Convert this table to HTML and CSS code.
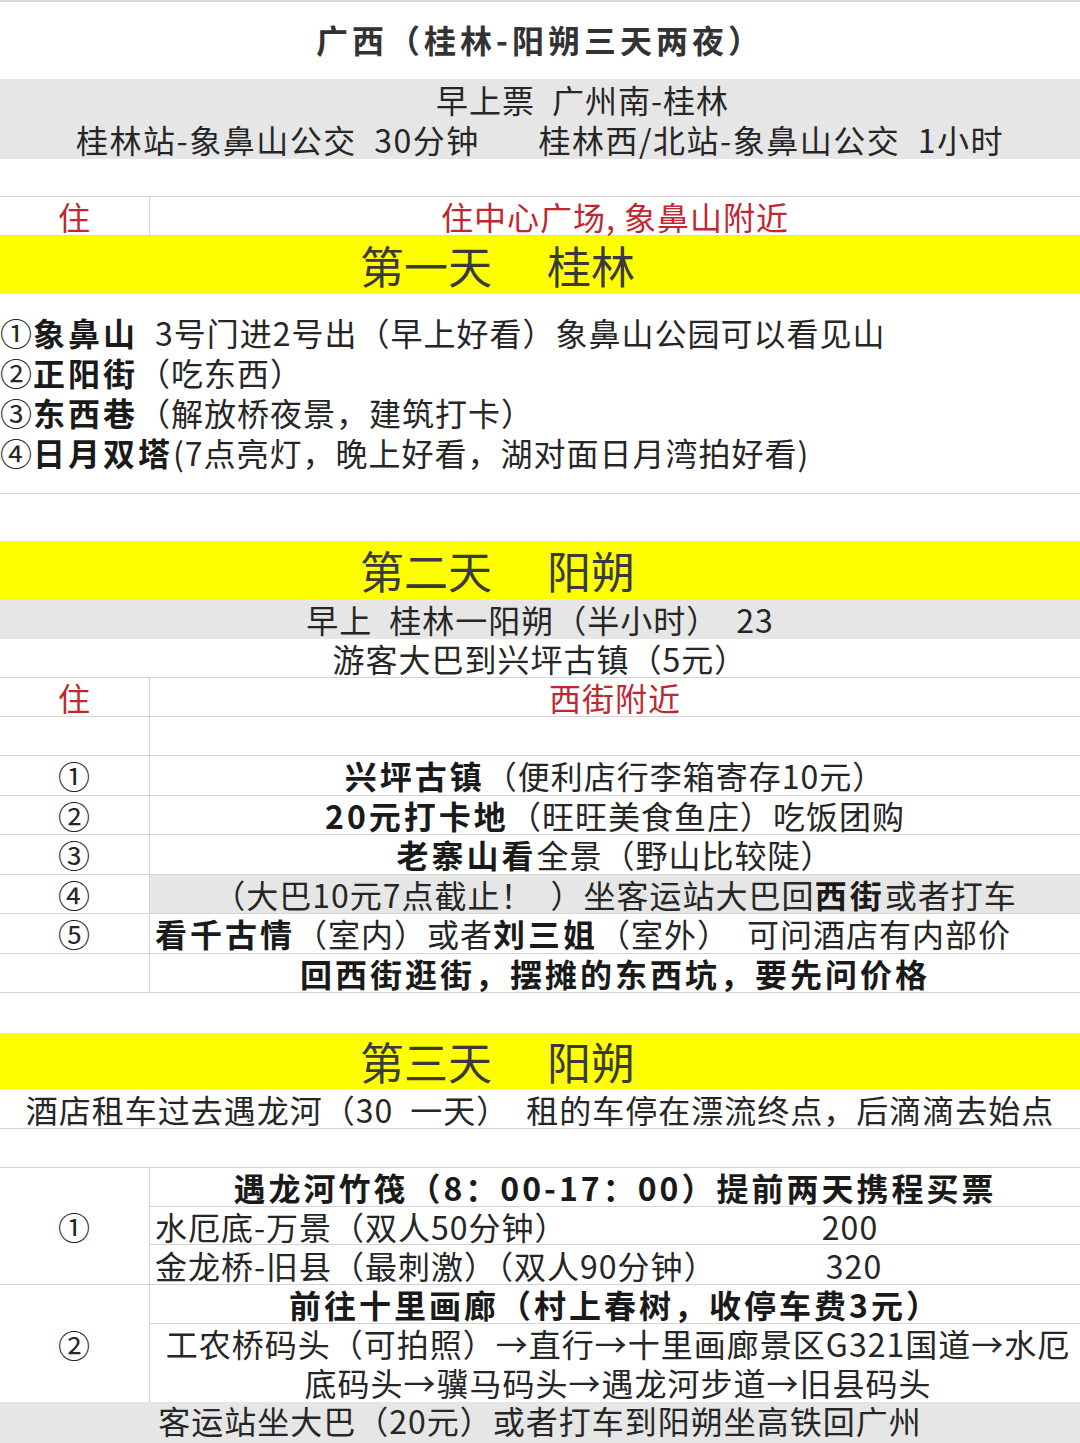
FILE: index.html
```html
<!DOCTYPE html>
<html lang="zh-CN">
<head>
<meta charset="utf-8">
<title>广西（桂林-阳朔三天两夜）</title>
<link rel="stylesheet" href="styles.css">
</head>
<body>
<div class="sheet">
  <div class="title">广西（桂林-阳朔三天两夜）</div>

  <div class="band gray">
    <div class="bline first">早上票&ensp;广州南-桂林</div>
    <div class="bline second">桂林站-象鼻山公交&ensp;30分钟&emsp;&ensp;&thinsp;桂林西/北站-象鼻山公交&ensp;1小时</div>
  </div>
  <div class="gap ruled h38"></div>
  <div class="row ruled h39">
    <div class="num red">住</div>
    <div class="cell red">住中心广场, 象鼻山附近</div>
  </div>

  <div class="day d1"><span>第一天</span><span>桂林</span></div>
  <div class="list ruled">
    <p>①<b>象鼻山</b>&ensp;3号门进2号出（早上好看）象鼻山公园可以看见山</p>
    <p>②<b>正阳街</b>（吃东西）</p>
    <p>③<b>东西巷</b>（解放桥夜景，建筑打卡）</p>
    <p>④<b>日月双塔</b>(7点亮灯，晚上好看，湖对面日月湾拍好看)</p>
  </div>
  <div class="gap h47"></div>

  <div class="day d2"><span>第二天</span><span>阳朔</span></div>
  <div class="wide gray h40">早上&ensp;桂林一阳朔（半小时）&ensp;23</div>
  <div class="wide ruled h39">游客大巴到兴坪古镇（5元）</div>
  <div class="row ruled h39">
    <div class="num red">住</div>
    <div class="cell red">西街附近</div>
  </div>
  <div class="row ruled h39">
    <div class="num"></div>
    <div class="cell"></div>
  </div>
  <div class="row ruled item">
    <div class="num">①</div>
    <div class="cell"><b>兴坪古镇</b>（便利店行李箱寄存10元）</div>
  </div>
  <div class="row ruled item">
    <div class="num">②</div>
    <div class="cell"><b>20元打卡地</b>（旺旺美食鱼庄）吃饭团购</div>
  </div>
  <div class="row ruled item">
    <div class="num">③</div>
    <div class="cell"><b>老寨山看</b>全景（野山比较陡）</div>
  </div>
  <div class="row ruled item">
    <div class="num">④</div>
    <div class="cell gray">（大巴10元7点截止！&ensp;）坐客运站大巴回<b>西街</b>或者打车</div>
  </div>
  <div class="row ruled item">
    <div class="num">⑤</div>
    <div class="cell left"><b>看千古情</b>（室内）或者<b>刘三姐</b>（室外）&ensp;可问酒店有内部价</div>
  </div>
  <div class="row ruled item">
    <div class="num"></div>
    <div class="cell"><b>回西街逛街，摆摊的东西坑，要先问价格</b></div>
  </div>
  <div class="gap h40"></div>

  <div class="day d3"><span>第三天</span><span>阳朔</span></div>
  <div class="wide ruled h40">酒店租车过去遇龙河（30&ensp;一天）&ensp;租的车停在漂流终点，后滴滴去始点</div>
  <div class="gap ruled h39"></div>

  <div class="block ruled">
    <div class="num">①</div>
    <div class="sub">
      <div class="srow ruled"><b>遇龙河竹筏（8：00-17：00）提前两天携程买票</b></div>
      <div class="srow ruled split"><span>水厄底-万景（双人50分钟）</span><span class="price">200</span></div>
      <div class="srow split"><span>金龙桥-旧县（最刺激）（双人90分钟）</span><span class="price p2">320</span></div>
    </div>
  </div>
  <div class="block">
    <div class="num">②</div>
    <div class="sub">
      <div class="srow ruled"><b>前往十里画廊（村上春树，收停车费3元）</b></div>
      <div class="srow tall">工农桥码头（可拍照）→直行→十里画廊景区G321国道→水厄<br>底码头→骥马码头→遇龙河步道→旧县码头</div>
    </div>
  </div>
  <div class="wide gray foot">客运站坐大巴（20元）或者打车到阳朔坐高铁回广州</div>
</div>
</body>
</html>
```

FILE: styles.css
```css
* {
  box-sizing: border-box;
  margin: 0;
  padding: 0;
}

html,
body {
  background: #ffffff;
}

body {
  width: 1080px;
  font-family: "Noto Sans CJK SC", "Noto Sans", sans-serif;
  font-size: 32px;
  letter-spacing: 1px;
  line-height: 34px;
  color: #262626;
}

b {
  font-weight: 700;
  letter-spacing: 3px;
  color: #1a1a1a;
}

.sheet {
  border-top: 2px solid #dadada;
}

.ruled {
  border-bottom: 1px solid #d4d4d4;
}

.gray {
  background: #e6e6e6;
}

.red {
  color: #c0282f;
}

.h38 { height: 38px; }
.h39 { height: 39px; }
.h40 { height: 40px; }
.h47 { height: 47px; }

.title {
  height: 77px;
  display: flex;
  align-items: center;
  justify-content: center;
  padding-bottom: 4px;
  font-weight: 700;
  letter-spacing: 4px;
  color: #333333;
}

.band {
  height: 80px;
}

.bline {
  height: 40px;
  display: flex;
  align-items: center;
  justify-content: center;
  white-space: pre;
}

.bline.first {
  justify-content: flex-start;
  padding-left: 436px;
}

.bline.second {
  letter-spacing: 1.5px;
}

.row {
  display: flex;
}

.row.item {
  height: 39.5px;
}

.num {
  width: 150px;
  flex: none;
  border-right: 1px solid #d4d4d4;
  display: flex;
  align-items: center;
  justify-content: center;
}

.cell {
  flex: 1;
  display: flex;
  align-items: center;
  justify-content: center;
  white-space: pre;
}

.cell.left {
  justify-content: flex-start;
  padding-left: 5px;
}

.day {
  height: 58px;
  background: #ffff00;
  display: flex;
  align-items: center;
  gap: 55px;
  padding-left: 360px;
  font-size: 44px;
  letter-spacing: 0;
  color: #3a3a3a;
}

.day.d3 {
  height: 56px;
}

.list {
  height: 200px;
  padding-top: 18px;
}

.list p {
  height: 40px;
  line-height: 40px;
  white-space: pre;
}

.wide {
  display: flex;
  align-items: center;
  justify-content: center;
  white-space: pre;
}

.block {
  display: flex;
  height: 117px;
}

.sub {
  flex: 1;
  display: flex;
  flex-direction: column;
}

.srow {
  height: 39px;
  display: flex;
  align-items: center;
  justify-content: center;
  white-space: pre;
}

.srow.split {
  display: grid;
  grid-template-columns: 640px 110px;
  align-items: center;
  padding-left: 5px;
  justify-content: start;
}

.price {
  text-align: center;
}

.price.p2 {
  padding-left: 8px;
}

.srow.tall {
  flex: 1;
  height: auto;
  flex-direction: column;
  text-align: center;
  line-height: 39px;
  padding-left: 6px;
}

.foot {
  height: 43px;
  padding-bottom: 8px;
}
```
